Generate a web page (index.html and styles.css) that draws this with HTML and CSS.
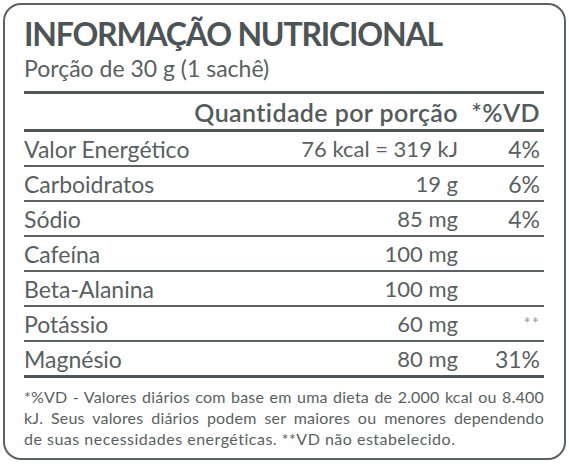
FILE: index.html
```html
<!DOCTYPE html>
<html lang="pt-BR">
  <head>
    <meta charset="UTF-8">
    <title>Informação nutricional</title>
    <link rel="stylesheet" href="styles.css">
  </head>
  <body>
    <div class="card">
      <h1 class="title">INFORMAÇÃO NUTRICIONAL</h1>
      <p class="portion">Porção de 30 g (1 sachê)</p>
      <!--Nutrient table-->
      <table class="facts">
        <thead>
          <tr>
            <th></th>
            <th class="amount">Quantidade por porção</th>
            <th class="dv">*%VD</th>
          </tr>
        </thead>
        <tbody>
          <tr><td>Valor Energético</td><td class="amount">76 kcal = 319 kJ</td><td class="dv">4%</td></tr>
          <tr><td>Carboidratos</td><td class="amount">19 g</td><td class="dv">6%</td></tr>
          <tr><td>Sódio</td><td class="amount">85 mg</td><td class="dv">4%</td></tr>
          <tr><td>Cafeína</td><td class="amount">100 mg</td><td class="dv"></td></tr>
          <tr><td>Beta-Alanina</td><td class="amount">100 mg</td><td class="dv"></td></tr>
          <tr><td>Potássio</td><td class="amount">60 mg</td><td class="dv stars">**</td></tr>
          <tr><td>Magnésio</td><td class="amount">80 mg</td><td class="dv">31%</td></tr>
        </tbody>
      </table>
      <!--Footnote, first two lines stretched edge to edge-->
      <p class="note">
        <span class="note-line full">*%VD - Valores diários com base em uma dieta de 2.000 kcal ou 8.400</span>
        <span class="note-line full">kJ. Seus valores diários podem ser maiores ou menores dependendo</span>
        <span class="note-line last">de suas necessidades energéticas. **VD não estabelecido.</span>
      </p>
    </div>
  </body>
</html>
```

FILE: styles.css
```css
body {
	margin: 0;
	font-family: Lato, sans-serif;
	color: #595f61;
	background: #ffffff;
}
.card {
	margin: 3px;
	height: 453px;
	border: 2px solid #5c6264;
	border-radius: 18px;
	padding: 0 20px 0 19px;
}
.title {
	margin: 0;
	padding-top: 9px;
	font-size: 32px;
	line-height: 40px;
	font-weight: 700;
	letter-spacing: -1.2px;
	color: #4c5456;
}
.portion {
	margin: 0;
	font-size: 23px;
	line-height: 28px;
}
.facts {
	width: 100%;
	border-collapse: collapse;
	margin-top: 9px;
}
.facts th {
	font-size: 25px;
	font-weight: 600;
	letter-spacing: 0.4px;
	height: 35px;
	padding: 0;
	border-top: 3px solid #4f5759;
	border-bottom: 3px solid #4f5759;
	color: #535b5d;
}
.facts td {
	font-size: 23px;
	height: 33px;
	padding: 0;
	border-bottom: 2px solid #5c6264;
}
.facts td.amount {
	font-size: 22px;
}
.facts tbody tr:last-child td {
	border-bottom: 3px solid #4f5759;
}
.amount {
	text-align: right;
}
.dv {
	text-align: right;
	width: 82px;
	padding-right: 4px !important;
}
.facts td.stars {
	font-size: 17px;
	letter-spacing: 1px;
	color: #9a9ea0;
}
.note {
	margin: 8px 0 0 0;
	font-size: 16px;
	line-height: 21px;
	letter-spacing: 0.2px;
}
.note-line {
	display: block;
	white-space: nowrap;
	text-align: left;
}
.note-line.full {
	text-align: justify;
	text-align-last: justify;
}
.note-line.last {
	letter-spacing: 0.5px;
}
```
